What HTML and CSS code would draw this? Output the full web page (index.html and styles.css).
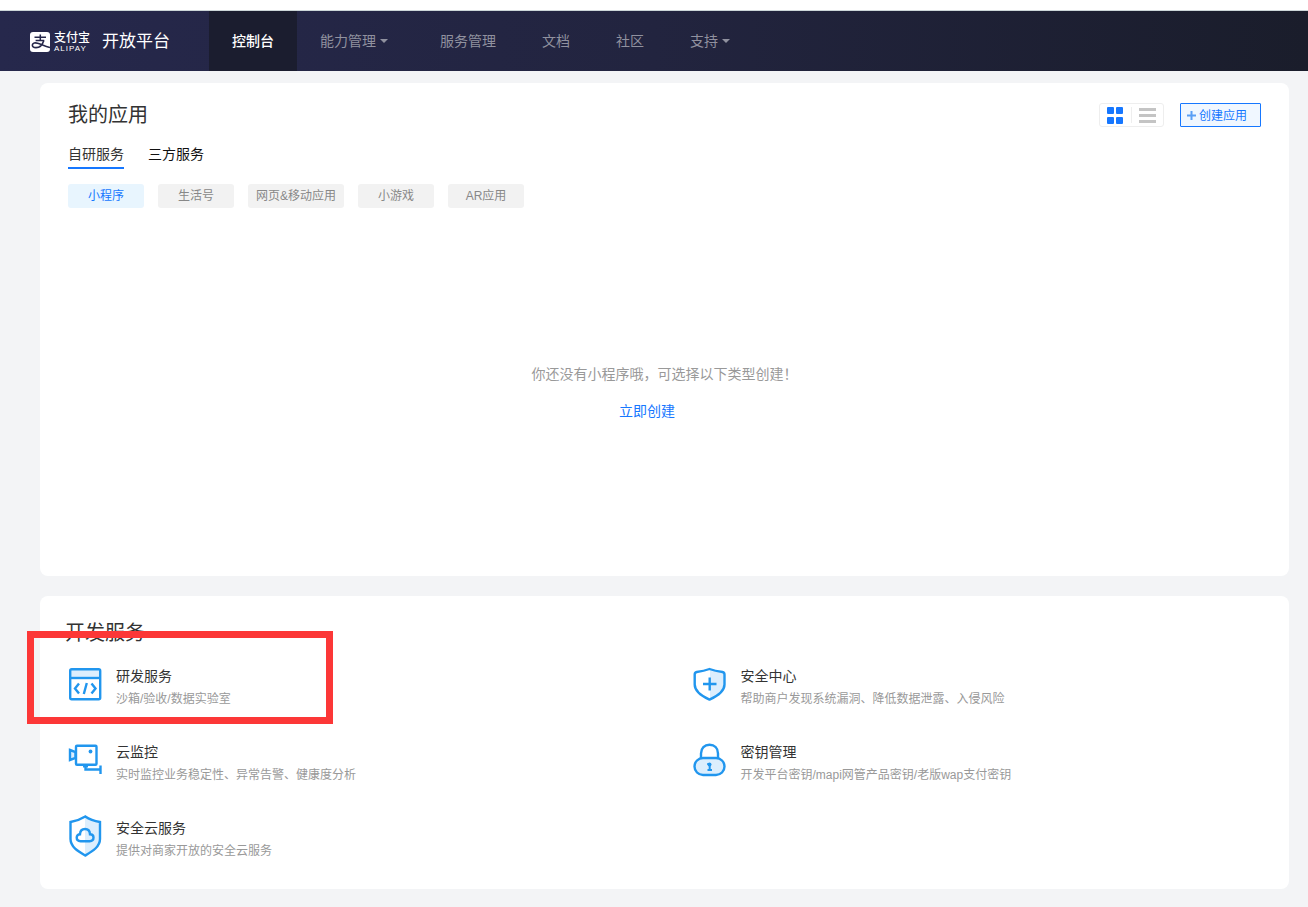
FILE: index.html
```html
<!DOCTYPE html>
<html lang="zh-CN">
<head>
<meta charset="utf-8">
<meta name="viewport" content="width=device-width, initial-scale=1">
<title>支付宝开放平台</title>
<link rel="stylesheet" href="styles.css">
</head>
<body>
<header class="header">
  <a class="brand" href="#">
    <svg class="brand-mark" viewBox="0 0 20 20" aria-hidden="true">
      <rect width="20" height="20" rx="3" fill="#fff"/>
      <g fill="none" stroke="#25274a" stroke-linecap="butt">
        <path d="M4.5 5.3H16M10.3 2.6V8.6M5.6 8.6H14.2" stroke-width="1.5"/>
        <path d="M13.8 8.4C12.6 12.4 9.8 15.6 6 15.6C3.4 15.6 2.2 14.4 2.4 12.9C2.7 10.9 5.2 10.6 7.6 11.2C10.6 12 14.6 14.2 20 15.6" stroke-width="1.6"/>
      </g>
    </svg>
    <span class="brand-name">
      <span class="brand-cn">支付宝</span>
      <span class="brand-en">ALIPAY</span>
    </span>
    <span class="brand-title">开放平台</span>
  </a>
  <nav class="nav">
    <a class="nav-item nav-item-active" href="#">控制台</a>
    <a class="nav-item" href="#">能力管理<span class="caret"></span></a>
    <a class="nav-item" href="#">服务管理</a>
    <a class="nav-item" href="#">文档</a>
    <a class="nav-item" href="#">社区</a>
    <a class="nav-item" href="#">支持<span class="caret"></span></a>
  </nav>
</header>

<main class="main">
  <section class="card apps">
    <div class="apps-head">
      <h2 class="card-title">我的应用</h2>
      <div class="apps-actions">
        <div class="view-switch">
          <button class="view-button" type="button" aria-label="卡片视图">
            <svg width="16" height="17" viewBox="0 0 16 17" fill="#1677ff"><rect width="7" height="7" rx="1"/><rect x="9" width="7" height="7" rx="1"/><rect y="10" width="7" height="7" rx="1"/><rect x="9" y="10" width="7" height="7" rx="1"/></svg>
          </button>
          <button class="view-button" type="button" aria-label="列表视图">
            <svg width="17" height="16" viewBox="0 0 17 16" fill="#c4c4c4"><rect y="1" width="17" height="3"/><rect y="7" width="17" height="3"/><rect y="13" width="17" height="3"/></svg>
          </button>
        </div>
        <button class="create-button" type="button">
          <svg width="9" height="9" viewBox="0 0 9 9" fill="none" stroke="#5a9ff5" stroke-width="2" aria-hidden="true"><path d="M0 4.5H9M4.5 0V9"/></svg>
          创建应用
        </button>
      </div>
    </div>
    <div class="tabs">
      <button class="tab tab-active" type="button">自研服务</button>
      <button class="tab" type="button">三方服务</button>
    </div>
    <div class="chips">
      <button class="chip chip-active" type="button">小程序</button>
      <button class="chip" type="button">生活号</button>
      <button class="chip" type="button">网页&amp;移动应用</button>
      <button class="chip" type="button">小游戏</button>
      <button class="chip" type="button">AR应用</button>
    </div>
    <div class="empty">
      <p class="empty-text">你还没有小程序哦，可选择以下类型创建！</p>
      <a class="empty-link" href="#">立即创建</a>
    </div>
  </section>

  <section class="card services">
    <h2 class="card-title services-title">开发服务</h2>
    <div class="service-grid">
      <a class="service" href="#">
        <svg class="service-icon" viewBox="0 0 34 34" fill="none" stroke="#2196ee" stroke-width="2.4" aria-hidden="true">
          <path d="M2 2H32V11H2Z" fill="#dceefd" stroke="none"/>
          <rect x="2.200" y="2.200" width="30" height="30" rx="1.500"/>
          <path d="M2 11H32"/>
          <path d="M11 16.500L7 21.500L11 26.500M23.500 16.500L27.500 21.500L23.500 26.500M18.800 16L15.800 27"/>
        </svg>
        <span class="service-text"><span class="service-name">研发服务</span><span class="service-desc">沙箱/验收/数据实验室</span></span>
      </a>
      <a class="service" href="#">
        <svg class="service-icon" viewBox="0 0 34 34" fill="none" stroke="#2196ee" stroke-width="2.4" aria-hidden="true">
          <path d="M17 2C21 4.500 26 5.400 31 5.600V18C31 25 24 29.500 17 32.500Z" fill="#dceefd" stroke="none"/>
          <path d="M16.500 2C21 3.700 25.500 4.500 29.500 5C31 5.300 31.500 6 31.500 7.500V17.500C31.500 24.500 25 28.800 16.500 32.600C8 28.800 1.700 24.500 1.700 17.500V7.500C1.700 6 2.200 5.300 3.700 5C7.500 4.500 12 3.700 16.500 2Z" stroke-linejoin="round"/>
          <path d="M10 17H23.500M16.700 10.500V23.500"/>
        </svg>
        <span class="service-text"><span class="service-name">安全中心</span><span class="service-desc">帮助商户发现系统漏洞、降低数据泄露、入侵风险</span></span>
      </a>
      <a class="service" href="#">
        <svg class="service-icon" viewBox="0 0 34 34" fill="none" stroke="#2196ee" stroke-width="2.4" aria-hidden="true">
          <path d="M2 7L7.500 9V15L2 17Z" fill="#dceefd"/>
          <rect x="8" y="2.800" width="20.500" height="19" rx="1"/>
          <circle cx="22.500" cy="8.500" r="1.900" fill="#2196ee" stroke="none"/>
          <path d="M17.500 22V26.500H32.500M32.500 22.500V31"/>
          <path d="M15 23H20" stroke-width="3"/>
        </svg>
        <span class="service-text"><span class="service-name">云监控</span><span class="service-desc">实时监控业务稳定性、异常告警、健康度分析</span></span>
      </a>
      <a class="service" href="#">
        <svg class="service-icon" viewBox="0 0 34 34" fill="none" stroke="#2196ee" stroke-width="2.4" aria-hidden="true">
          <path d="M8 15V10.500C8 5 11.500 1.800 16.500 1.800C21.500 1.800 25 5 25 10.500V15"/>
          <rect x="1.500" y="15" width="30" height="17" rx="8.500" fill="#dceefd"/>
          <circle cx="16.500" cy="21.500" r="2" fill="#2196ee" stroke="none"/>
          <path d="M16.700 22V27.500M14.500 27H19M14.300 21H16.500" stroke-width="2"/>
        </svg>
        <span class="service-text"><span class="service-name">密钥管理</span><span class="service-desc">开发平台密钥/mapi网管产品密钥/老版wap支付密钥</span></span>
      </a>
      <a class="service" href="#">
        <svg class="service-icon service-icon-tall" viewBox="0 0 34 42" fill="none" stroke="#2196ee" stroke-width="2.4" aria-hidden="true">
          <path d="M17 2C21 5 26 6 32 7V25C32 32 24 37 17 40Z" fill="#dceefd" stroke="none"/>
          <path d="M17.300 1.500C21.500 4.500 25.500 6 32 7V24C32 32 24 36.500 17.300 40.500C10.500 36.500 2.500 32 2.500 24V7C8.500 6 12.500 4.500 17.300 1.500Z"/>
          <path d="M12.500 26.200C10 26.200 8.700 24.500 8.700 22.600C8.700 20.600 10.200 19.200 12 19.200C12.200 16 14.300 14 17 14C19.700 14 21.800 16 22 19.200C24 19.200 25.500 20.600 25.500 22.600C25.500 24.500 24.200 26.200 21.700 26.200Z"/>
        </svg>
        <span class="service-text"><span class="service-name">安全云服务</span><span class="service-desc">提供对商家开放的安全云服务</span></span>
      </a>
    </div>
    <div class="highlight" aria-hidden="true"></div>
  </section>
</main>
</body>
</html>
```

FILE: styles.css
```css
* {
  box-sizing: border-box;
}

body {
  margin: 0;
  padding-top: 10px;
  background: linear-gradient(#fff 10px, #f3f4f6 10px);
  font-family: "Liberation Sans", "Noto Sans CJK SC", sans-serif;
  font-size: 14px;
  line-height: 20px;
  color: #333;
}

a {
  color: inherit;
  text-decoration: none;
}

button {
  margin: 0;
  padding: 0;
  border: 0;
  background: none;
  font: inherit;
  color: inherit;
  cursor: pointer;
}

h2,
p {
  margin: 0;
}

.header {
  display: flex;
  height: 61px;
  border-top: 1px solid #ccd6d8;
  background: linear-gradient(90deg, #26284c, #22243f 50%, #1a1d2b);
}

.brand {
  display: flex;
  align-items: center;
  width: 209px;
  padding: 2px 0 0 30px;
  color: #fff;
}

.brand-mark {
  width: 20px;
  height: 20px;
}

.brand-name {
  display: flex;
  flex-direction: column;
  margin-left: 4px;
  width: 36px;
}

.brand-cn {
  font-size: 12px;
  line-height: 13px;
  font-weight: 500;
}

.brand-en {
  font-size: 8px;
  line-height: 8px;
  letter-spacing: 1px;
}

.brand-title {
  margin-left: 12px;
  font-size: 17px;
}

.nav {
  display: flex;
}

.nav-item {
  display: flex;
  align-items: center;
  padding: 0 23px;
  color: #90919f;
  white-space: nowrap;
}

.nav-item-active {
  background: #1b1d2f;
  color: #fff;
  font-weight: 500;
}

.caret {
  margin: 0 6px 0 4px;
  border: 4px solid transparent;
  border-top-color: currentColor;
  border-bottom: 0;
}

.main {
  display: flex;
  flex-direction: column;
  gap: 20px;
  padding: 12px 19px 18px 40px;
}

.card {
  border-radius: 8px;
  background: #fff;
}

.card-title {
  font-size: 20px;
  line-height: 28px;
  font-weight: 400;
}

.apps {
  padding: 18px 28px 155px;
}

.apps-head,
.apps-actions {
  display: flex;
  align-items: center;
}

.apps-head {
  justify-content: space-between;
}

.apps-actions {
  gap: 16px;
}

.view-switch {
  display: flex;
  align-items: center;
  height: 24px;
  border: 1px solid #eee;
  border-radius: 3px;
}

.view-button {
  display: flex;
  align-items: center;
  justify-content: center;
  width: 31px;
  height: 16px;
  padding-right: 2px;
}

.view-button + .view-button {
  width: 32px;
  padding-right: 0;
  border-left: 1px solid #eee;
}

.create-button {
  display: flex;
  align-items: center;
  gap: 3px;
  width: 81px;
  height: 24px;
  padding: 1px 0 0 6px;
  border: 1px solid #1677ff;
  border-radius: 1px;
  background: #f0f7ff;
  color: #1677ff;
  font-size: 12px;
}

.tabs {
  display: flex;
  gap: 24px;
  margin-top: 14px;
}

.tab {
  height: 26px;
  padding-bottom: 3px;
  border-bottom: 2px solid transparent;
  color: #111;
}

.tab-active {
  border-color: #1677ff;
  color: #333;
}

.chips {
  display: flex;
  gap: 14px;
  margin-top: 15px;
}

.chip {
  min-width: 76px;
  height: 24px;
  padding: 0 8px;
  border-radius: 3px;
  background: #f2f2f2;
  color: #888;
  font-size: 12px;
}

.chip-active {
  background: #e8f5fe;
  color: #1677ff;
}

.empty {
  display: flex;
  flex-direction: column;
  align-items: center;
  gap: 17px;
  margin-top: 156px;
}

.empty-text {
  color: #999;
}

.empty-link {
  margin-right: 35px;
  color: #1677ff;
}

.services {
  position: relative;
  padding: 23px 0 27px;
}

.services-title {
  padding-left: 25px;
}

.service-grid {
  display: grid;
  grid-template-columns: 1fr 1fr;
  row-gap: 32px;
  margin-top: 19px;
}

.service {
  display: flex;
  align-items: flex-start;
  gap: 14px;
  height: 44px;
  padding-left: 28px;
}

.service-icon {
  width: 34px;
  height: 34px;
  margin-top: 1px;
}

.service-icon-tall {
  height: 42px;
  margin-top: -3px;
}

.service-text {
  display: flex;
  flex-direction: column;
  gap: 3px;
}

.service-desc {
  color: #999;
  font-size: 12px;
}

.highlight {
  position: absolute;
  top: 35px;
  left: -13px;
  width: 306px;
  height: 93px;
  border: 7px solid #fc3737;
}
```
